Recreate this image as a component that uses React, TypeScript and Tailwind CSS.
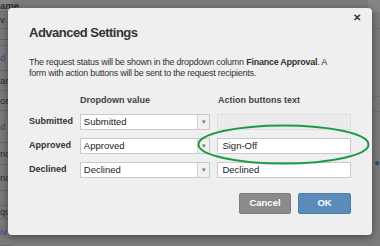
import React from "react";

const bgRows = [
  { t: "ame", h: 12, cls: "font-bold text-[#2a2a2a]", bg: "bg-[#858585]" },
  { t: "v", h: 17, cls: "text-[#2a2a2a]" },
  { t: "...", h: 17, cls: "text-[#1e3a6e]" },
  { t: "d", h: 25, cls: "text-[#2c4f80]" },
  { t: "an", h: 20, cls: "text-[#2a2a2a]" },
  { t: "os", h: 20, cls: "text-[#2a2a2a]" },
  { t: "d", h: 32, cls: "text-[#2c4f80]" },
  { t: "nc", h: 22, cls: "text-[#2a2a2a]" },
  { t: "na", h: 26, cls: "text-[#2a2a2a]" },
  { t: "", h: 15, cls: "" },
  { t: "qu", h: 13, cls: "text-[#2a2a2a]" },
  { t: "iv", h: 27, cls: "text-[#2c4f80]" },
];

function Select({ value }: { value: string }) {
  return (
    <div className="flex h-[16px] w-[131px] border border-[#c9c9c9] bg-white">
      <div className="flex flex-1 items-center pl-[3px] text-[9.5px] text-[#222]">{value}</div>
      <div className="flex w-[12px] items-center justify-center border-l border-[#d4d4d4] bg-[#f1f1f1] text-[7px] text-[#777]">
        ▾
      </div>
    </div>
  );
}

function TextBox({ value, disabled }: { value: string; disabled?: boolean }) {
  return (
    <div
      className={
        disabled
          ? "h-[16px] w-[134px] border border-[#dedede] bg-[#ebebeb]"
          : "flex h-[16px] w-[134px] items-center border border-[#c9c9c9] bg-white pl-[4px] text-[9.5px] text-[#222]"
      }
    >
      {value}
    </div>
  );
}

export default function App() {
  return (
    <div
      className="relative h-[246px] w-[380px] overflow-hidden bg-[#7b7b7b]"
      style={{ fontFamily: '"Liberation Sans", Arial, sans-serif' }}
    >
      {/* background page */}
      <div className="flex h-full">
        <div className="flex w-[12px] flex-col">
          {bgRows.map((r, i) => (
            <div
              key={i}
              className={`flex items-center border-b border-[#6a6a6a] text-[9.5px] leading-none ${r.cls} ${r.bg ?? ""}`}
              style={{ height: r.h }}
            >
              {r.t}
            </div>
          ))}
        </div>
        <div className="flex-1" />
        <div className="flex w-[12px] flex-col">
          <div className="h-[12px] bg-[#858585]" />
          <div className="h-[17px] border-b border-[#6f6f6f]" />
          <div className="h-[68px] border-b border-[#6f6f6f]" />
          <div className="h-[15px] border-b border-[#6f6f6f]" />
          <div className="h-[58px] flex items-end justify-end text-[10px] text-[#2c4f80]">●</div>
        </div>
      </div>

      {/* modal */}
      <div className="absolute left-[8px] top-[8px] flex h-[227px] w-[364px] flex-col rounded-[4px] bg-[#efefef] px-[21px] shadow-[0_2px_8px_rgba(0,0,0,0.45)]">
        <div className="absolute right-[11px] top-[4px] text-[10px] font-bold leading-[12px] text-[#333]">✕</div>
        <div className="mt-[17px] text-[13px] font-bold leading-[16px] tracking-[-0.5px] text-[#333]">
          Advanced Settings
        </div>
        <div className="mt-[16px] whitespace-nowrap text-[9px] leading-[10.5px] tracking-[-0.25px] text-[#333]">
          The request status will be shown in the dropdown column <b>Finance Approval</b>. A
          <br />
          form with action buttons will be sent to the request recipients.
        </div>
        <div className="mt-[16px] flex text-[9px] font-bold leading-[12px] text-[#444]">
          <div className="w-[51px]" />
          <div className="w-[138px]">Dropdown value</div>
          <div>Action buttons text</div>
        </div>
        <div className="mt-[8px] flex flex-col gap-[8px]">
          {[
            ["Submitted", "Submitted", ""],
            ["Approved", "Approved", "Sign-Off"],
            ["Declined", "Declined", "Declined"],
          ].map(([l, v, a], i) => (
            <div key={l} className="flex items-center">
              <div className="w-[51px] text-[9px] font-bold text-[#333]">{l}</div>
              <Select value={v} />
              <div className="w-[7px]" />
              <TextBox value={a} disabled={i === 0} />
            </div>
          ))}
        </div>
        <div className="mt-[15px] flex justify-end gap-[7px]">
          <div className="flex h-[21px] w-[52px] items-center justify-center rounded-[2px] border border-[#7c7c7c] bg-[#8b8b8b] text-[9.5px] font-bold text-white">
            Cancel
          </div>
          <div className="flex h-[21px] w-[53px] items-center justify-center rounded-[2px] border border-[#4f7fab] bg-[#5b8cb9] text-[9.5px] font-bold text-white">
            OK
          </div>
        </div>
      </div>

      {/* highlight ellipse */}
      <svg className="absolute left-[196px] top-[124px]" width="176" height="42" viewBox="0 0 176 42">
        <ellipse cx="87.5" cy="20.5" rx="85" ry="19" fill="none" stroke="#1f9a44" strokeWidth="2" />
      </svg>
    </div>
  );
}
